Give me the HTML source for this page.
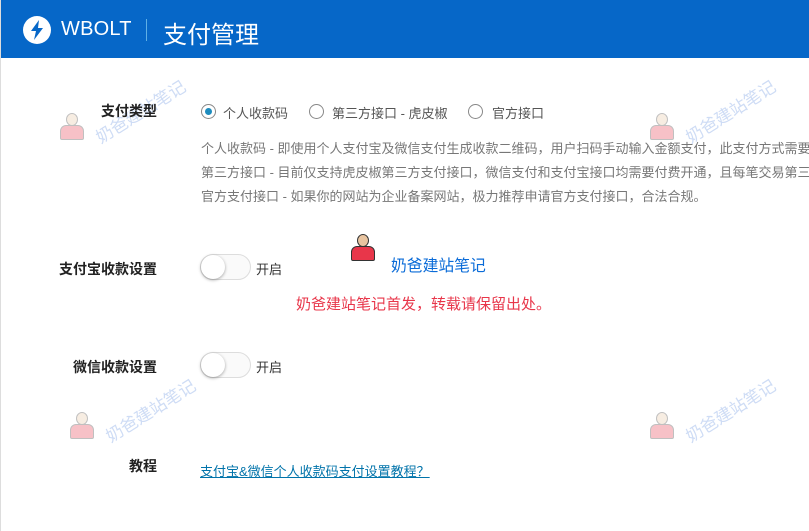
<!DOCTYPE html>
<html><head><meta charset="utf-8"><style>
*{margin:0;padding:0;box-sizing:border-box}
body{width:809px;height:531px;overflow:hidden;background:#fff;font-family:"Liberation Sans","Noto Sans CJK SC",sans-serif;position:relative;border-left:1px solid #ddd}
.hdr{position:absolute;left:0;top:0;width:809px;height:58px;background:#0667c8;color:#fff}
.logo{position:absolute;left:22px;top:16px;width:28px;height:28px;border-radius:50%;background:#fff}
.wb{position:absolute;left:60px;top:18px;font-size:20px;letter-spacing:0.2px}
.sep{position:absolute;left:145px;top:19px;width:1px;height:22px;background:#5fb0e6}
.ttl{position:absolute;left:162px;top:15px;font-size:24px}
.lbl{position:absolute;font-size:14px;color:#222;font-weight:600;text-align:right;width:100px}
.t{position:absolute;font-size:13px;color:#555;white-space:nowrap}
.g{position:absolute;font-size:13px;color:#777;white-space:nowrap;overflow:hidden;width:608px}
.radio{position:absolute;width:15px;height:15px;border:1px solid #888;border-radius:50%}
.radio.on::after{content:"";position:absolute;left:3px;top:3px;width:7px;height:7px;border-radius:50%;background:#1e8cbe}
.sw{position:absolute;width:51px;height:26px;border:1px solid #ddd;border-radius:13px;background:#fafafa}
.sw::after{content:"";position:absolute;left:0;top:0;width:24px;height:24px;border-radius:50%;background:#fff;box-shadow:0 1px 3px rgba(0,0,0,.35)}
.wm{position:absolute;font-size:17px;color:rgba(80,130,220,.28);transform:rotate(-32deg);white-space:nowrap}
.av{position:absolute;width:26px;height:28px}
.av .h{position:absolute;left:7px;top:0;width:12px;height:13px;border-radius:50%;background:#e8c4a0;border:1px solid #333}
.av .b{position:absolute;left:1px;top:12px;width:24px;height:15px;border-radius:6px 6px 2px 2px;background:#e8364a;border:1px solid #333}
.fade{opacity:.3}
</style></head><body>
<div class="hdr">
<div class="logo"><svg width="28" height="28" viewBox="0 0 28 28"><path d="M16 4 L8 15 L13 15 L11 24 L20 12 L15 12 Z" fill="#0667c8"/></svg></div>
<div class="wb">WBOLT</div><div class="sep"></div><div class="ttl">支付管理</div>
</div>

<div class="av fade" style="left:58px;top:113px"><div class="h"></div><div class="b"></div></div>
<div class="wm" style="left:88px;top:98px">奶爸建站笔记</div>
<div class="av fade" style="left:648px;top:113px"><div class="h"></div><div class="b"></div></div>
<div class="wm" style="left:678px;top:98px">奶爸建站笔记</div>
<div class="av fade" style="left:68px;top:412px"><div class="h"></div><div class="b"></div></div>
<div class="wm" style="left:98px;top:397px">奶爸建站笔记</div>
<div class="av fade" style="left:648px;top:412px"><div class="h"></div><div class="b"></div></div>
<div class="wm" style="left:678px;top:397px">奶爸建站笔记</div>

<div class="lbl" style="left:56px;top:101px">支付类型</div>
<div class="radio on" style="left:200px;top:104px"></div><div class="t" style="left:222px;top:103px">个人收款码</div>
<div class="radio" style="left:308px;top:104px"></div><div class="t" style="left:331px;top:103px">第三方接口 - 虎皮椒</div>
<div class="radio" style="left:467px;top:104px"></div><div class="t" style="left:491px;top:103px">官方接口</div>
<div class="g" style="left:200px;top:138px">个人收款码 - 即使用个人支付宝及微信支付生成收款二维码，用户扫码手动输入金额支付，此支付方式需要</div>
<div class="g" style="left:200px;top:162px">第三方接口 - 目前仅支持虎皮椒第三方支付接口，微信支付和支付宝接口均需要付费开通，且每笔交易第三</div>
<div class="g" style="left:200px;top:186px">官方支付接口 - 如果你的网站为企业备案网站，极力推荐申请官方支付接口，合法合规。</div>

<div class="lbl" style="left:56px;top:259px">支付宝收款设置</div>
<div class="sw" style="left:199px;top:254px"></div><div class="t" style="left:255px;top:259px;color:#333">开启</div>
<div class="av" style="left:349px;top:234px"><div class="h"></div><div class="b"></div></div>
<div class="t" style="left:390px;top:253px;font-size:15.8px;color:#0a6bd8">奶爸建站笔记</div>
<div class="t" style="left:295px;top:293px;font-size:15px;color:#e8364a">奶爸建站笔记首发，转载请保留出处。</div>

<div class="lbl" style="left:56px;top:357px">微信收款设置</div>
<div class="sw" style="left:199px;top:352px"></div><div class="t" style="left:255px;top:357px;color:#333">开启</div>

<div class="lbl" style="left:56px;top:456px">教程</div>
<div class="t" style="left:199px;top:461px;color:#0073aa;text-decoration:underline;font-size:13px">支付宝&amp;微信个人收款码支付设置教程？</div>
</body></html>
